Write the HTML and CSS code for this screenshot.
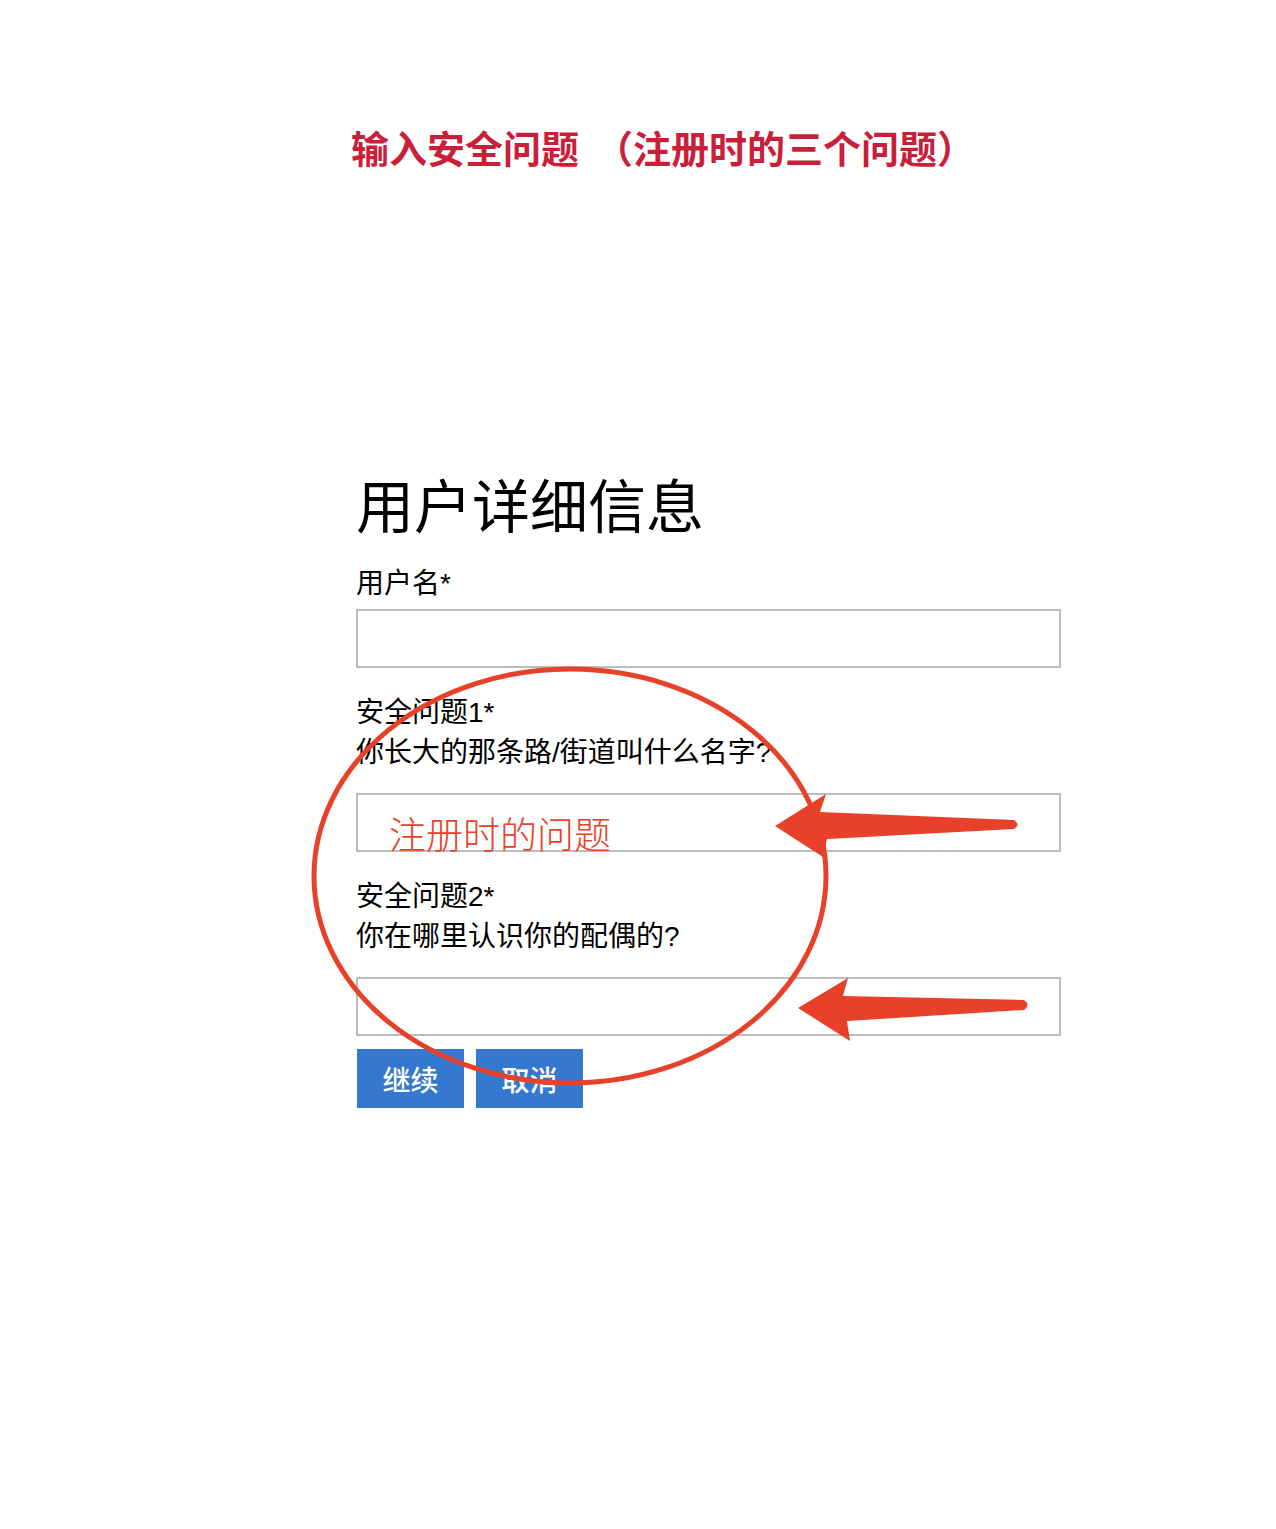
FILE: index.html
```html
<!DOCTYPE html>
<html lang="zh-CN">
<head>
<meta charset="utf-8">
<title>输入安全问题</title>
<link rel="stylesheet" href="styles.css">
</head>
<body>
<div class="page">
  <h1 class="title">输入安全问题<span class="paren">（</span>注册时的三个问题）</h1>
  <form class="form">
    <h2 class="heading">用户详细信息</h2>
    <label class="label label-user">用户名*</label>
    <div class="input input-first"></div>
    <div class="group">
      <div class="label">安全问题1*</div>
      <div class="label">你长大的那条路/街道叫什么名字?</div>
    </div>
    <div class="input"></div>
    <div class="group">
      <div class="label">安全问题2*</div>
      <div class="label">你在哪里认识你的配偶的?</div>
    </div>
    <div class="input"></div>
    <div class="buttons">
      <span class="btn">继续</span>
      <span class="btn">取消</span>
    </div>
  </form>

  <div class="overlay">
    <svg class="marks" width="1276" height="1529" viewBox="0 0 1276 1529">
      <ellipse cx="570" cy="876" rx="256" ry="207" fill="none" stroke="#e8412a" stroke-width="5"/>
      <path d="M775,826 L826,794 L820,812 L1014,820 Q1021,824.5 1014,829 L827,839 L823,857 Z" fill="#e8412a"/>
      <path d="M798,1008 L848,978 L843,996 L1024,1000 Q1031,1005 1024,1010 L847,1021 L850,1041 Z" fill="#e8412a"/>
    </svg>
    <div class="note">注册时的问题</div>
  </div>
</div>
</body>
</html>
```
FILE: styles.css
```css
* { box-sizing: border-box; }
body {
  margin: 0;
  background: #fff;
  font-family: "Noto Sans CJK SC", "Noto Sans", sans-serif;
  color: #000;
}
.page {
  position: relative;
  width: 1276px;
  height: 1529px;
  overflow: hidden;
}
.title {
  margin: 0;
  padding: 122px 0 0 351px;
  font-size: 38px;
  line-height: 50px;
  font-weight: 700;
  color: #c91f3a;
  white-space: nowrap;
  text-spacing-trim: space-all;
}
.paren { margin-left: 16px; }
.form {
  width: 705px;
  margin: 299px 0 0 356px;
  display: flex;
  flex-direction: column;
}
.heading {
  margin: -3px 0 0;
  font-size: 58px;
  line-height: 70px;
  font-weight: 400;
}
.label {
  display: block;
  font-family: "Liberation Sans", "Noto Sans CJK SC", sans-serif;
  font-size: 28px;
  line-height: 40px;
}
.label-user { margin-top: 26px; }
.input {
  height: 59px;
  border: 2px solid #bcbcbc;
}
.input-first { margin-top: 5px; }
.group { margin-top: 25px; }
.group + .input { margin-top: 20px; }
.buttons {
  display: flex;
  gap: 12px;
  margin-top: 13px;
  padding-left: 1px;
}
.btn {
  width: 107px;
  height: 59px;
  background: #3478cf;
  color: #fff;
  font-size: 28px;
  font-weight: 500;
  display: flex;
  align-items: center;
  justify-content: center;
}
.overlay {
  position: absolute;
  left: 0;
  top: 0;
  width: 1276px;
  height: 1529px;
  pointer-events: none;
}
.marks { display: block; }
.note {
  position: absolute;
  left: 389px;
  top: 808px;
  font-size: 37px;
  line-height: 50px;
  font-weight: 300;
  color: #e8412a;
  white-space: nowrap;
}
```
